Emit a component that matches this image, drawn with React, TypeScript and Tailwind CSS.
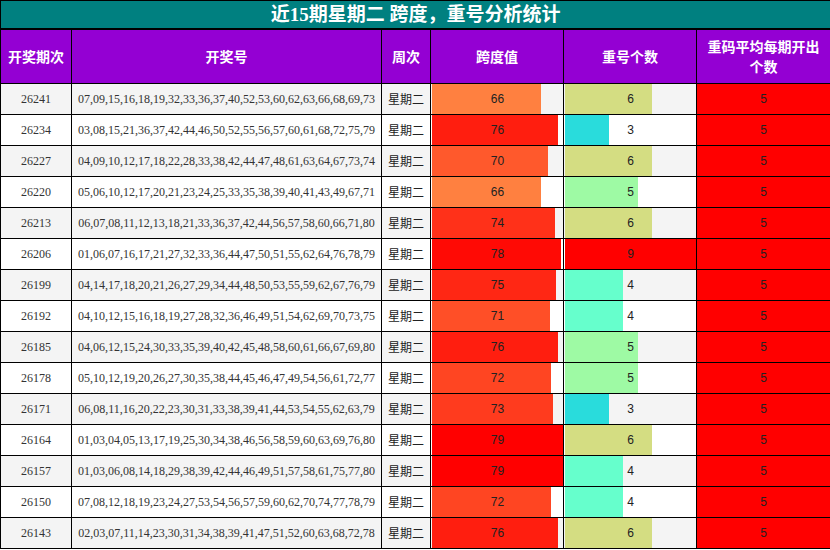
const ROWS: [string, string, number, number][] = [
  ['26241', '07,09,15,16,18,19,32,33,36,37,40,52,53,60,62,63,66,68,69,73', 66, 6],
  ['26234', '03,08,15,21,36,37,42,44,46,50,52,55,56,57,60,61,68,72,75,79', 76, 3],
  ['26227', '04,09,10,12,17,18,22,28,33,38,42,44,47,48,61,63,64,67,73,74', 70, 6],
  ['26220', '05,06,10,12,17,20,21,23,24,25,33,35,38,39,40,41,43,49,67,71', 66, 5],
  ['26213', '06,07,08,11,12,13,18,21,33,36,37,42,44,56,57,58,60,66,71,80', 74, 6],
  ['26206', '01,06,07,16,17,21,27,32,33,36,44,47,50,51,55,62,64,76,78,79', 78, 9],
  ['26199', '04,14,17,18,20,21,26,27,29,34,44,48,50,53,55,59,62,67,76,79', 75, 4],
  ['26192', '04,10,12,15,16,18,19,27,28,32,36,46,49,51,54,62,69,70,73,75', 71, 4],
  ['26185', '04,06,12,15,24,30,33,35,39,40,42,45,48,58,60,61,66,67,69,80', 76, 5],
  ['26178', '05,10,12,19,20,26,27,30,35,38,44,45,46,47,49,54,56,61,72,77', 72, 5],
  ['26171', '06,08,11,16,20,22,23,30,31,33,38,39,41,44,53,54,55,62,63,79', 73, 3],
  ['26164', '01,03,04,05,13,17,19,25,30,34,38,46,56,58,59,60,63,69,76,80', 79, 6],
  ['26157', '01,03,06,08,14,18,29,38,39,42,44,46,49,51,57,58,61,75,77,80', 79, 4],
  ['26150', '07,08,12,18,19,23,24,27,53,54,56,57,59,60,62,70,74,77,78,79', 72, 4],
  ['26143', '02,03,07,11,14,23,30,31,34,38,39,41,47,51,52,60,63,68,72,78', 76, 6],
]

const REPEAT_COLORS: Record<number, string> = {
  3: '#29dcdc',
  4: '#66ffcc',
  5: '#9efaa4',
  6: '#d4dd82',
  9: '#ff0000',
}

// span colour runs from orange at 66 to pure red at 79
function spanColor(v: number) {
  const t = Math.min(1, Math.max(0, (79 - v) / 13))
  return `rgb(255, ${Math.round(128 * t)}, ${Math.round(64 * t)})`
}

function bar(color: string, pct: number) {
  return {
    background: `linear-gradient(to right, ${color} 0, ${color} ${pct}%, transparent ${pct}%)`,
  }
}

const serif = "font-['Liberation_Serif','Noto_Sans_CJK_SC',serif]"
const cjk = "font-['Noto_Sans_CJK_SC',sans-serif]"
const sans = "font-['Liberation_Sans','Noto_Sans_CJK_SC',sans-serif]"

export default function App() {
  return (
    <div className="w-[830px] h-[550px] bg-white overflow-hidden">
      <table className="w-[830px] table-fixed border-collapse border border-black">
        <colgroup>
          <col className="w-[71px]" />
          <col className="w-[310px]" />
          <col className="w-[49px]" />
          <col className="w-[133px]" />
          <col className="w-[133px]" />
          <col className="w-[134px]" />
        </colgroup>
        <thead>
          <tr className="h-[28px]">
            <th
              colSpan={6}
              className={`bg-[#008080] text-white text-[19px] font-bold leading-none border-b-2 border-black ${serif}`}
            >
              近15期星期二 跨度，重号分析统计
            </th>
          </tr>
          <tr className={`h-[55px] bg-[#9400d3] text-white text-[14px] font-bold leading-[20px] ${cjk}`}>
            <th className="border border-black px-0">开奖期次</th>
            <th className="border border-black">开奖号</th>
            <th className="border border-black">周次</th>
            <th className="border border-black">跨度值</th>
            <th className="border border-black">重号个数</th>
            <th className="border border-black px-[6px]">重码平均每期开出个数</th>
          </tr>
        </thead>
        <tbody>
          {ROWS.map(([period, nums, span, repeat], i) => (
            <tr
              key={period}
              className={`h-[31px] text-[12px] text-[#333] ${i % 2 === 0 ? 'bg-[#f4f4f4]' : 'bg-white'}`}
            >
              <td className={`border border-black text-center ${serif}`}>{period}</td>
              <td className={`border border-black text-center whitespace-nowrap ${serif}`}>{nums}</td>
              <td className={`border border-black text-center text-[#222] ${cjk}`}>星期二</td>
              <td className="border border-black p-0 pl-[1px]">
                <div
                  className={`h-[30px] flex items-center justify-center text-[#222] ${sans}`}
                  style={bar(spanColor(span), (span / 79) * 100)}
                >
                  {span}
                </div>
              </td>
              <td className="border border-black p-0 pl-[1px]">
                <div
                  className={`h-[30px] flex items-center justify-center text-[#222] ${sans}`}
                  style={bar(REPEAT_COLORS[repeat], (repeat / 9) * 100)}
                >
                  {repeat}
                </div>
              </td>
              <td className={`border border-black bg-[#ff0000] text-center text-[#222] ${sans}`}>5</td>
            </tr>
          ))}
        </tbody>
      </table>
    </div>
  )
}
